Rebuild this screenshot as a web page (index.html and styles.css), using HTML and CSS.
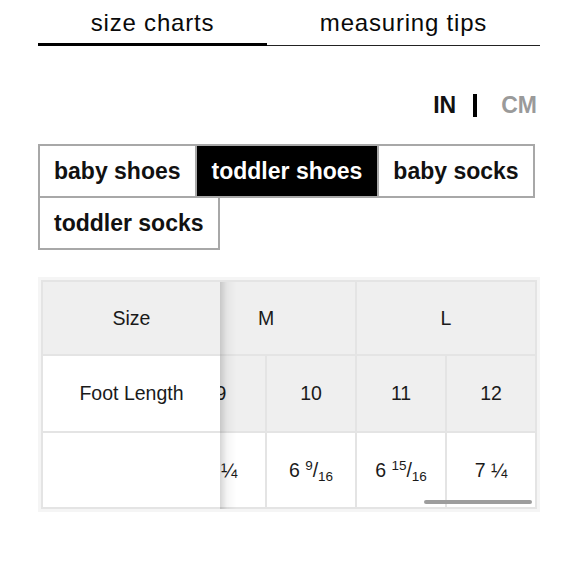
FILE: index.html
```html
<!DOCTYPE html>
<html lang="en">
<head>
<meta charset="utf-8">
<title>Size charts</title>
<link rel="stylesheet" href="styles.css">
</head>
<body>
<div class="page">
  <nav class="tabs">
    <div class="tab active">size charts</div>
    <div class="tab">measuring tips</div>
  </nav>

  <div class="units">
    <span class="unit">IN</span>
    <span class="sep"></span>
    <span class="unit off">CM</span>
  </div>

  <div class="segments">
    <button class="seg">baby shoes</button>
    <button class="seg selected">toddler shoes</button>
    <button class="seg">baby socks</button>
    <button class="seg">toddler socks</button>
  </div>

  <div class="chart">
    <div class="scroll">
      <table>
        <colgroup>
          <col class="c-first">
          <col class="c-size"><col class="c-size"><col class="c-size">
          <col class="c-size"><col class="c-size"><col class="c-size">
        </colgroup>
        <tr class="head">
          <td class="stick">Size</td>
          <td colspan="2">S</td>
          <td colspan="2">M</td>
          <td colspan="2">L</td>
        </tr>
        <tr class="sizes">
          <td class="stick">Foot Length</td>
          <td>7</td><td>8</td><td>9</td><td>10</td><td>11</td><td>12</td>
        </tr>
        <tr class="vals">
          <td class="stick"></td>
          <td>5 ⅝</td>
          <td>5 <sup>15</sup>/<sub>16</sub></td>
          <td>6 ¼</td>
          <td>6 <sup>9</sup>/<sub>16</sub></td>
          <td>6 <sup>15</sup>/<sub>16</sub></td>
          <td>7 ¼</td>
        </tr>
      </table>
    </div>
    <div class="indicator"></div>
  </div>
</div>
<script src="script.js"></script>
</body>
</html>
```

FILE: styles.css
```css
body {
  margin: 0;
  background: #fff;
  font-family: "Liberation Sans", Arial, sans-serif;
  color: #111;
}

.page {
  padding: 0 40px 0 38px;
}

/* top tabs */
.tabs {
  display: flex;
  align-items: flex-end;
}
.tab {
  height: 46px;
  box-sizing: border-box;
  padding-top: 9px;
  line-height: 28px;
  font-size: 24px;
  letter-spacing: 0.8px;
  text-align: center;
  color: #0a0a0a;
  border-bottom: 1px solid #222;
}
.tab.active {
  width: 229px;
  border-bottom: 3px solid #000;
}
.tab:not(.active) {
  flex: 1;
}

/* unit switch */
.units {
  display: flex;
  justify-content: flex-end;
  align-items: center;
  margin-top: 45px;
  height: 28px;
  padding-right: 3px;
  font-size: 23px;
  font-weight: bold;
  line-height: 28px;
}
.unit.off {
  color: #9a9a9a;
}
.sep {
  width: 4px;
  height: 23px;
  background: #000;
  margin: 0 24px 0 17px;
}

/* category buttons */
.segments {
  display: flex;
  flex-wrap: wrap;
  margin-top: 25px;
}
.seg {
  height: 54px;
  box-sizing: border-box;
  border: 2px solid #a8a8a8;
  margin: 0 -2px -2px 0;
  padding: 0 14px;
  font-family: inherit;
  font-size: 23px;
  font-weight: bold;
  line-height: 50px;
  background: #fff;
  color: #111;
}
.seg.selected {
  background: #000;
  color: #fff;
  padding: 0 15px;
}

/* chart */
.chart {
  position: relative;
  margin-top: 29px;
  border: 3px solid #f5f5f5;
}
.scroll {
  overflow-x: auto;
  scrollbar-width: none;
}
.scroll::-webkit-scrollbar {
  display: none;
}
table {
  border-collapse: separate;
  border-spacing: 0;
  table-layout: fixed;
  width: 719px;
}
.c-first { width: 179px; }
.c-size { width: 90px; }

td {
  box-sizing: border-box;
  padding: 0;
  border-right: 2px solid #e4e4e4;
  border-bottom: 2px solid #e4e4e4;
  text-align: center;
  vertical-align: middle;
  font-size: 19.5px;
  color: #1a1a1a;
  background: #fff;
  white-space: nowrap;
}
.head td {
  height: 76px;
  border-top: 2px solid #e4e4e4;
  background: #efefef;
}
.sizes td {
  height: 77px;
  background: #efefef;
}
.vals td {
  height: 76px;
}
.sizes td.stick {
  background: #fff;
}
td.stick {
  position: sticky;
  left: 0;
  z-index: 1;
  border-left: 2px solid #e4e4e4;
  border-right: 0;
}
.head td.stick {
  background: #efefef;
}
td.stick::after {
  content: "";
  position: absolute;
  top: 0;
  bottom: -2px;
  left: 100%;
  width: 16px;
  background: linear-gradient(to right, rgba(0, 0, 0, 0.16), rgba(0, 0, 0, 0.04) 45%, rgba(0, 0, 0, 0));
}
sup, sub {
  font-size: 13.5px;
  line-height: 0;
}
sup { vertical-align: 7px; }
sub { vertical-align: -4px; }

.indicator {
  position: absolute;
  right: 5px;
  bottom: 5px;
  width: 108px;
  height: 4px;
  border-radius: 2px;
  background: #9d9d9d;
}
```

FILE: script.js
```js
(function () {
  function toEnd() {
    var s = document.querySelector('.scroll');
    if (s) s.scrollLeft = s.scrollWidth;
  }
  toEnd();
  window.addEventListener('load', toEnd);
})();
```
